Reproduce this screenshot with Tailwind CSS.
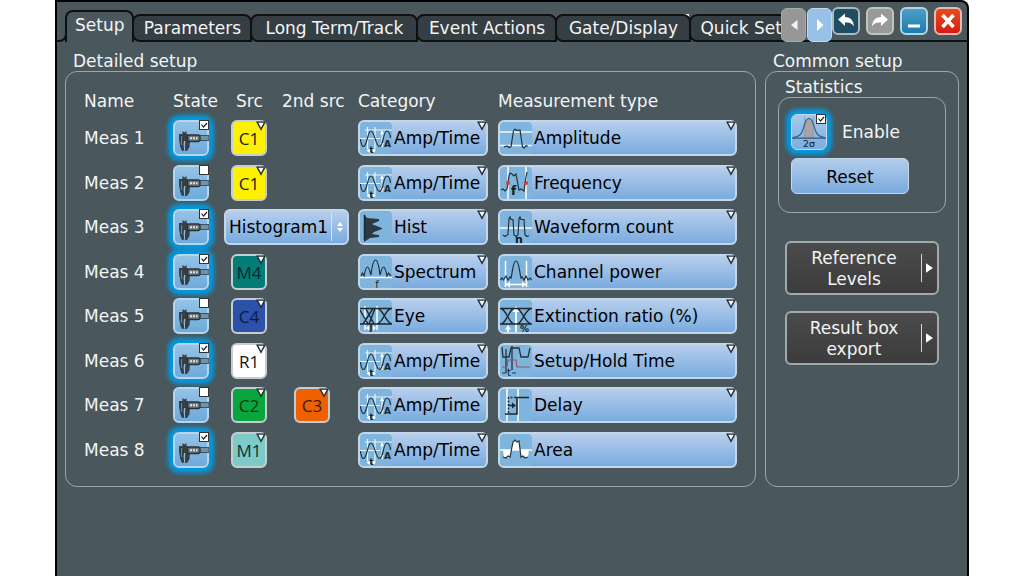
<!DOCTYPE html>
<html lang="en">
<head>
<meta charset="utf-8">
<title>Measurement setup</title>
<script src="https://cdn.jsdelivr.net/npm/@tailwindcss/browser@4"></script>
</head>
<body class="bg-white px-[55px] font-['DejaVu_Sans','Open_Sans',sans-serif] text-[17px] leading-5 text-gray-100">

<svg class="hidden" aria-hidden="true">
  <symbol id="caliper" viewBox="0 0 36 36">
    <path d="M24 15.500h12v5H24z" fill="#7191a6" stroke="#3c5265" stroke-width="1"/>
    <path d="M6 14h9v7h-4l-.5 4 1 5.500L9 31l-1.500-3L6 20z" fill="#353f46"/>
    <path d="M12.500 20H17l-.5 7-2.500 4h-1.500l-.8-2z" fill="#353f46"/>
    <path d="M9.500 11l2 1.500 2-1.500v4h-4z" fill="#353f46"/>
    <path d="M8.500 16v9" stroke="#6d8799" stroke-width="1"/>
    <path d="M11.500 21v9" stroke="#8fb9d8" stroke-width="1"/>
    <rect x="14.500" y="15" width="12.500" height="6.500" rx="2" fill="#6c777c" stroke="#2b3237" stroke-width="1.300"/>
    <path d="M17 18.200h2m1 0h2m1 0h1.500" stroke="#e2e6e6" stroke-width="2"/>
  </symbol>
  <symbol id="sigma" viewBox="0 0 36 36">
    <path d="M13.500 24.500V9c1-3 2.500-5 4.500-5s3.500 2 4.500 5v15.500z" fill="#a9a4a8"/>
    <path d="M13.500 2v22M22.500 2v22" stroke="#8398ad"/>
    <path d="M1 24c7-1 9-3 11-10 1.500-6 3-10.500 6-10.500S22.500 8 24 14c2 7 4 9 11 10" fill="none" stroke="#3f628e" stroke-width="1.300"/>
    <path d="M0 24.500h36" stroke="#2f5682" stroke-width="1.500"/>
    <text x="18" y="33.500" text-anchor="middle" font-family="DejaVu Sans" font-size="10" fill="#1c2833" stroke="#1c2833" stroke-width=".2">2σ</text>
  </symbol>
  <symbol id="tri" viewBox="0 0 9 9"><path d="M1 1h7L4.500 7.500z" fill="#fff" stroke="#222b33" stroke-width="1.300"/></symbol>

  <symbol id="amptime" viewBox="0 0 32 32">
    <path d="M5 8h27M0 16.500h20" stroke="#e6f4fd" stroke-width="1.200"/>
    <path d="M7.500 5v22M15 5v22M22 9v16" stroke="#e6f4fd" stroke-width="1.200"/>
    <path d="M6.500 28.500l3.500-2.500v5zM16 28.500l-3-2.500v5zM20 12l2-3.500 2 3.500zM20 21l2 3.500 2-3.500z" fill="#fff"/>
    <path d="M.5 17c.5 5 1.500 7.500 3 7.500C7 24.500 7.500 9 11 9s4.500 15.500 8.500 15.500C23.500 24.500 23 9 27 9c2 0 3 3 3.500 7" fill="none" stroke="#25323d" stroke-width="1.200"/>
    <text x="11.500" y="31" text-anchor="middle" font-family="DejaVu Sans" font-weight="bold" font-size="9" fill="#1a2530">t</text>
    <text x="27.500" y="25" text-anchor="middle" font-family="DejaVu Sans" font-weight="bold" font-size="9" fill="#1a2530">A</text>
  </symbol>
  <symbol id="hist" viewBox="0 0 32 32">
    <path d="M4 3l3 4 12 1v2l-7 3 2 1 8 3v1l-8 3-2 2 7 1v2l-9 1-6 4z" fill="#2c3a45"/>
    <path d="M4.500 4v25" stroke="#1b2935" stroke-width="1.500"/>
  </symbol>
  <symbol id="spectrum" viewBox="0 0 32 32">
    <path d="M0 21.500h32" stroke="#fff" stroke-width="1.500"/>
    <path d="M1 20l1.500-3L4 20c1-5 2-9 3.500-9S10 16 11 19c1-9 2.500-15 4.500-15S19 10 20 19c1-3 2-8 3.500-8s2.500 4 3.500 9l1.500-3 2.500 3" fill="none" stroke="#25323d" stroke-width="1.200"/>
    <text x="17" y="31.500" text-anchor="middle" font-family="DejaVu Sans" font-size="10" fill="#1a2530">f</text>
  </symbol>
  <symbol id="eye" viewBox="0 0 32 32">
    <path d="M5 6v24M17 6v24" stroke="#fff" stroke-width="1.500"/>
    <path d="M6 28l3-2.500v5zM16 28l-3-2.500v5z" fill="#fff"/>
    <path d="M0 8.500h32M0 24h32M0 10l8 14M3 24L13 8.500M6 9l8 15M9 24l6-15.500M18 8.500c5 1 8 14.500 14 15.500M17 24c6-1 8-14.500 14-15.500" fill="none" stroke="#1d2730" stroke-width="1.400"/>
    <text x="11" y="31" text-anchor="middle" font-family="DejaVu Sans" font-weight="bold" font-size="8" fill="#1a2530">J</text>
  </symbol>
  <symbol id="amplitude" viewBox="0 0 32 32">
    <path d="M0 10h32M0 23.500h32" stroke="#f3faff" stroke-width="1.500"/>
    <path d="M4 25l3-1 2 1.500 2-1L13.500 9 15 7l2 1.500 3-.5L22.500 25l2 1 1.500-2.500 2 1" fill="none" stroke="#25323d" stroke-width="1.200"/>
  </symbol>
  <symbol id="frequency" viewBox="0 0 32 32">
    <path d="M8 0v32M26 0v32" stroke="#fff" stroke-width="1.500"/>
    <path d="M1 23l2-1 2 2 2-2L9 9l1-3 2 1 2 2 2-2 3 16 2-1 3 2 2-14 1-5" fill="none" stroke="#25323d" stroke-width="1.200"/>
    <circle cx="8" cy="16" r="2" fill="#e2343b"/><circle cx="26" cy="16" r="2" fill="#e2343b"/>
    <text x="13.500" y="28" text-anchor="middle" font-family="DejaVu Sans" font-weight="bold" font-size="12" fill="#101820">f</text>
  </symbol>
  <symbol id="wavecount" viewBox="0 0 32 32">
    <path d="M0 17h32" stroke="#fff" stroke-width="1.500"/>
    <path d="M3 24l2 1.500 3-2L9 8l1-2 1 2.500h2L14 24l2 1.500 2-1.500L19 8l1-2 1 2.500h3L25 24l2 1.500 2-1" fill="none" stroke="#25323d" stroke-width="1.200"/>
    <text x="19" y="31.500" text-anchor="middle" font-family="DejaVu Sans" font-weight="bold" font-size="11" fill="#101820">n</text>
  </symbol>
  <symbol id="chanpower" viewBox="0 0 32 32">
    <path d="M5.500 5v26M26.500 5v26M6 28.500h20" stroke="#fff" stroke-width="1.500"/>
    <path d="M6 28.500l4-3v6zM26 28.500l-4-3v6z" fill="#fff"/>
    <path d="M0 24l2-2 1.500 2L6 20l2 4 2-3 1 1c2-8 2-17 5-17s3 9 5 17l1-1 2 3 2-4 2 4 2-2 2 2" fill="none" stroke="#25323d" stroke-width="1.200"/>
  </symbol>
  <symbol id="extinction" viewBox="0 0 32 32">
    <path d="M16 8v24M8 27v6" stroke="#fff" stroke-width="1.800"/>
    <path d="M12.500 12L16 6l3.500 6zM5 29.500l3-4.500 3 4.500z" fill="#fff"/>
    <path d="M0 8.500h32M0 24h32M1 24c5 0 8-14.500 13-15.500M1 8.500c5 1 8 14.500 13 15.500M17 24c5 0 8-14.500 14-15.500M17 8.500c5 1 8 14.500 14 15.500" fill="none" stroke="#1d2730" stroke-width="1.400"/>
    <text x="24.500" y="32" text-anchor="middle" font-family="DejaVu Sans" font-weight="bold" font-size="9" fill="#101820">%</text>
  </symbol>
  <symbol id="setuphold" viewBox="0 0 32 32">
    <path d="M12 1v24M6 4v24" stroke="#25323d" stroke-width="1.300"/>
    <path d="M2 2l1 10h6l2-9h8l2 9h7l2-9" fill="none" stroke="#25323d" stroke-width="1.300"/>
    <path d="M2 22h5l1-7h8l1 7h13" fill="none" stroke="#8c5872" stroke-width="1.200"/>
    <path d="M2 28h4M12 28h4" stroke="#25323d"/>
    <text x="9" y="31" text-anchor="middle" font-family="DejaVu Sans" font-size="10" fill="#101820">t</text>
  </symbol>
  <symbol id="delay" viewBox="0 0 32 32">
    <path d="M7 0v32M18 0v32" stroke="#fff" stroke-width="1.500"/>
    <path d="M5 25h12V8.500h12" fill="none" stroke="#1d2730" stroke-width="1.600"/>
    <path d="M8.500 24V8.500h8" fill="none" stroke="#1d2730" stroke-width="1.400" stroke-dasharray="2 1.500"/>
    <path d="M9 16.500h4" stroke="#1d2730" stroke-width="1.400"/><path d="M12 13.500l4 3-4 3z" fill="#1d2730"/>
  </symbol>
  <symbol id="area" viewBox="0 0 32 32">
    <path d="M3 16l1 8 2-1 2 1 2-1 3-15 2-2 2 2 2-1 2 16 2-1 2 2 3-1 1-7z" fill="#fff"/>
    <path d="M0 16h32" stroke="#fff" stroke-width="1.500"/>
    <path d="M3 23l3 1 2-2 2 1 3-15 2-2 2 2 2-1 2 16 2-1 2 2 3-1" fill="none" stroke="#25323d" stroke-width="1.200"/>
  </symbol>
</svg>

<div class="flex min-h-screen flex-col overflow-hidden rounded-tr-lg border-x-2 border-t-2 border-black bg-[#4a575c]">

  <header class="flex h-10">
    <div class="relative flex min-w-0 flex-1 items-end overflow-hidden">
      <svg class="absolute right-[82px] bottom-6 h-1 w-4" viewBox="0 0 16 4" aria-hidden="true"><path d="M0 0h6v3H4z" fill="#fff"/><path d="M9 2l3-2h4z" fill="#b5bcbf"/></svg>
      <div class="-mr-0.5 h-4 w-2.5 shrink-0 rounded-br-lg border-r-2 border-b-2 border-[#0c1114]"></div>
      <nav class="relative flex items-end whitespace-nowrap" role="tablist" aria-label="Sections">
        <button role="tab" aria-selected="true" class="h-8 rounded-t-lg border-x-2 border-t-2 border-[#0c1114] bg-[#4a575c] px-2 pb-1">Setup</button>
        <button role="tab" aria-selected="false" class="-ml-0.5 h-7 w-[120px] shrink-0 rounded-t-lg rounded-bl-lg border-2 border-[#0c1114] bg-[#353e42]">Parameters</button>
        <button role="tab" aria-selected="false" class="-ml-0.5 h-7 w-[168px] shrink-0 rounded-t-lg rounded-bl-lg border-2 border-[#0c1114] bg-[#353e42]">Long Term/Track</button>
        <button role="tab" aria-selected="false" class="-ml-0.5 h-7 w-[141px] shrink-0 rounded-t-lg rounded-bl-lg border-2 border-[#0c1114] bg-[#353e42]">Event Actions</button>
        <button role="tab" aria-selected="false" class="-ml-0.5 h-7 w-[136px] shrink-0 rounded-t-lg rounded-bl-lg border-2 border-[#0c1114] bg-[#353e42]">Gate/Display</button>
        <button role="tab" aria-selected="false" class="-ml-0.5 h-7 shrink-0 rounded-t-lg rounded-bl-lg border-2 border-[#0c1114] bg-[#353e42] px-[9px]">Quick Setup</button>
      </nav>
    </div>
    <div class="flex shrink-0 items-start gap-1.5 border-b-2 border-[#0c1114] pt-[5px] pr-[5px]">
      <div class="-mr-1.5 flex gap-px pt-px">
        <button aria-label="Scroll tabs left" class="grid h-[34px] w-[25px] place-items-center rounded-md border border-[#aaa] bg-[#979797]"><svg class="h-3 w-2" viewBox="0 0 8 12"><path d="M7.500 1v10L1 6z" fill="#f4f4f4"/></svg></button>
        <button aria-label="Scroll tabs right" class="grid h-[34px] w-[25px] place-items-center rounded-md border border-[#c3daf0] bg-[#98c1ea]"><svg class="h-3 w-2" viewBox="0 0 8 12"><path d="M1 0v12l6.500-6z" fill="#fff"/></svg></button>
      </div>
      <button aria-label="Undo" class="grid size-7 place-items-center rounded-md border-2 border-[#a9bac2] bg-[#1f4d62]"><svg class="size-5" viewBox="0 0 20 20"><path d="M2 8.500L9 2.500v3.500c6 0 8.500 4 9 9.500-2-3.500-4.500-4.500-9-4v3.500z" fill="#fff"/></svg></button>
      <button aria-label="Redo" class="grid size-7 place-items-center rounded-md border-2 border-[#c2c2c2] bg-[#999]"><svg class="size-5" viewBox="0 0 20 20"><path d="M18 8.500L11 2.500v3.500c-6 0-8.500 4-9 9.500 2-3.500 4.500-4.500 9-4v3.500z" fill="#fff"/></svg></button>
      <button aria-label="Minimize" class="grid size-7 place-items-center rounded-md border-2 border-[#b3d5e6] bg-linear-to-b from-[#4c9fc5] to-[#1a7cae]"><svg class="size-5" viewBox="0 0 20 20"><path d="M4 13.500h12v3H4z" fill="#fff"/></svg></button>
      <button aria-label="Close" class="grid size-7 place-items-center rounded-md border-2 border-[#e6b9b2] bg-linear-to-b from-[#ea4a1c] to-[#d21a14]"><svg class="size-5" viewBox="0 0 20 20"><path d="M4.500 4l11 12M15.500 4l-11 12" stroke="#fff" stroke-width="3.600"/></svg></button>
    </div>
  </header>

  <main class="flex gap-[9px] px-2 pt-[9px]">
    <section class="min-w-0 flex-1">
      <h2 class="pl-2">Detailed setup</h2>
      <div class="rounded-xl border border-[#9da6a9] px-[18px] py-3.5">
        <table class="h-[386px] w-full table-fixed border-collapse text-left">
          <colgroup><col class="w-[83px]"><col class="w-[57px]"><col class="w-[58px]"><col class="w-[76px]"><col class="w-[140px]"><col></colgroup>
          <thead>
            <tr class="h-[30px] whitespace-nowrap">
              <th class="p-0 font-normal">Name</th>
              <th class="p-0 pl-1.5 font-normal">State</th>
              <th class="p-0 pl-3 font-normal">Src</th>
              <th class="p-0 font-normal">2nd src</th>
              <th class="p-0 font-normal">Category</th>
              <th class="p-0 font-normal">Measurement type</th>
            </tr>
          </thead>
          <tbody id="rows"></tbody>
        </table>
      </div>
    </section>

    <section class="flex w-[194px] flex-col">
      <h2 class="pl-2">Common setup</h2>
      <div class="flex flex-1 flex-col rounded-xl border border-[#9da6a9] px-3 pt-[5px]">
        <h3 class="pl-[7px]">Statistics</h3>
        <div class="flex h-[116px] flex-col gap-2 rounded-xl border border-[#9da6a9] px-3 pt-4">
          <label class="flex items-center gap-[15px]">
            <span class="relative block size-9 rounded-md border border-[#b9ddf5] bg-linear-to-b from-[#a6c9ea] to-[#79afe0] shadow-[0_0_4px_5px_#0498df]">
              <svg class="size-full"><use href="#sigma"/></svg>
              <input type="checkbox" checked class="peer absolute -top-px right-0 size-2.5 appearance-none border border-[#333] bg-white">
              <svg class="pointer-events-none absolute -top-px right-0 hidden size-2.5 peer-checked:block" viewBox="0 0 10 10"><path d="M2.500 4.500l2 2.500 3.500-4" fill="none" stroke="#222" stroke-width="1.200"/></svg>
            </span>
            Enable
          </label>
          <button class="h-9 w-[118px] rounded-md border border-[#c3d8ec] bg-linear-to-b from-[#b4cdec] to-[#78aadf] pt-0.5 text-black">Reset</button>
        </div>
        <div class="flex flex-col gap-4 px-[7px] pt-7">
          <button class="flex h-[54px] items-center rounded-md border-2 border-[#a3a8aa] bg-linear-to-b from-[#4b4b4b] to-[#3c3c3c] pr-1 leading-[21px]">
            <span class="flex-1 pt-0.5 text-center">Reference<br>Levels</span>
            <span class="flex h-7 items-center border-l border-gray-300 pl-1"><svg class="h-2.5 w-[7px]" viewBox="0 0 6 8"><path d="M0 0v8l6-4z" fill="#fff"/></svg></span>
          </button>
          <button class="flex h-[54px] items-center rounded-md border-2 border-[#a3a8aa] bg-linear-to-b from-[#4b4b4b] to-[#3c3c3c] pr-1 leading-[21px]">
            <span class="flex-1 pt-0.5 text-center">Result box<br>export</span>
            <span class="flex h-7 items-center border-l border-gray-300 pl-1"><svg class="h-2.5 w-[7px]" viewBox="0 0 6 8"><path d="M0 0v8l6-4z" fill="#fff"/></svg></span>
          </button>
        </div>
      </div>
    </section>
  </main>
</div>

<script>
  const colors = {
    C1: 'bg-[#fdf000] text-[#222]', M4: 'bg-[#047c78] text-[#06282a]', C4: 'bg-[#2b51a9] text-[#0a1a45]',
    R1: 'bg-white text-[#111]', C2: 'bg-[#08a63c] text-[#053a16]', C3: 'bg-[#ee6000] text-[#3c1c04]', M1: 'bg-[#7ccbc9] text-[#14302f]'
  };
  const amp = ['amptime', 'Amp/Time'];
  const rows = [
    [true, 'C1', '', amp, ['amplitude', 'Amplitude']],
    [false, 'C1', '', amp, ['frequency', 'Frequency']],
    [true, 'Histogram1', '', ['hist', 'Hist'], ['wavecount', 'Waveform count']],
    [true, 'M4', '', ['spectrum', 'Spectrum'], ['chanpower', 'Channel power']],
    [false, 'C4', '', ['eye', 'Eye'], ['extinction', 'Extinction ratio (%)']],
    [true, 'R1', '', amp, ['setuphold', 'Setup/Hold Time']],
    [false, 'C2', 'C3', amp, ['delay', 'Delay']],
    [true, 'M1', '', amp, ['area', 'Area']]
  ];
  const tri = '<svg class="pointer-events-none absolute top-px right-px size-2.5"><use href="#tri"/></svg>';
  const source = (s, label) => s ? `<div class="relative size-9">
      <select aria-label="${label}" class="size-full appearance-none rounded-md border-2 border-[#c5cdd2] p-0 pt-0.5 text-center font-['Open_Sans',sans-serif] text-[17px] [text-align-last:center] ${colors[s]}"><option>${s}</option></select>${tri}</div>` : '';
  const choice = ([icon, text], label) => `<div class="relative h-9">
      <select aria-label="${label}" class="size-full appearance-none rounded-md border-2 border-[#c2d7ea] bg-linear-to-b from-[#b7ceec] to-[#79abdf] p-0 pl-[34px] text-black"><option>${text}</option></select>
      <svg class="pointer-events-none absolute top-0.5 left-0.5 size-8 rounded bg-[#7fb5dc]"><use href="#${icon}"/></svg>${tri}</div>`;
  document.getElementById('rows').innerHTML = rows.map(([on, src, src2, cat, type], i) => {
    const name = 'Meas ' + (i + 1);
    const sources = src === 'Histogram1'
      ? `<td colspan="2" class="p-0"><div class="relative h-9 w-[125px]">
          <select aria-label="${name} source" class="size-full appearance-none rounded-md border-2 border-[#c2d7ea] bg-linear-to-b from-[#b7ceec] to-[#79abdf] p-0 pl-[3px] text-black"><option>Histogram1</option></select>
          <span class="pointer-events-none absolute inset-y-1 right-0.5 grid w-4 place-items-center border-l border-[#d6e5f4]"><svg class="h-3 w-2" viewBox="0 0 8 12"><path d="M1 5l3-4 3 4zM1 7l3 4 3-4z" fill="#fff"/></svg></span></div></td>`
      : `<td class="p-0 pl-[7px]">${source(src, name + ' source')}</td><td class="p-0 pl-3">${source(src2, name + ' second source')}</td>`;
    return `<tr>
      <th scope="row" class="p-0 font-normal whitespace-nowrap">${name}</th>
      <td class="p-0 pl-1.5"><label class="relative block size-9 rounded-md border-2 border-[#b4d6ee] bg-linear-to-b from-[#94c3e6] to-[#6faadb] ${on ? 'shadow-[0_0_4px_5px_#0498df]' : ''}">
        <svg class="absolute -top-0.5 -left-0.5 size-9"><use href="#caliper"/></svg>
        <input type="checkbox" aria-label="${name} on" ${on ? 'checked' : ''} class="peer absolute -top-0.5 -right-0.5 size-2.5 appearance-none border border-[#333] bg-white">
        <svg class="pointer-events-none absolute -top-0.5 -right-0.5 hidden size-2.5 peer-checked:block" viewBox="0 0 10 10"><path d="M2.500 4.500l2 2.500 3.500-4" fill="none" stroke="#222" stroke-width="1.200"/></svg>
      </label></td>
      ${sources}
      <td class="p-0 pr-2.5">${choice(cat, name + ' category')}</td>
      <td class="p-0">${choice(type, name + ' type')}</td>
    </tr>`;
  }).join('');
</script>
</body>
</html>
